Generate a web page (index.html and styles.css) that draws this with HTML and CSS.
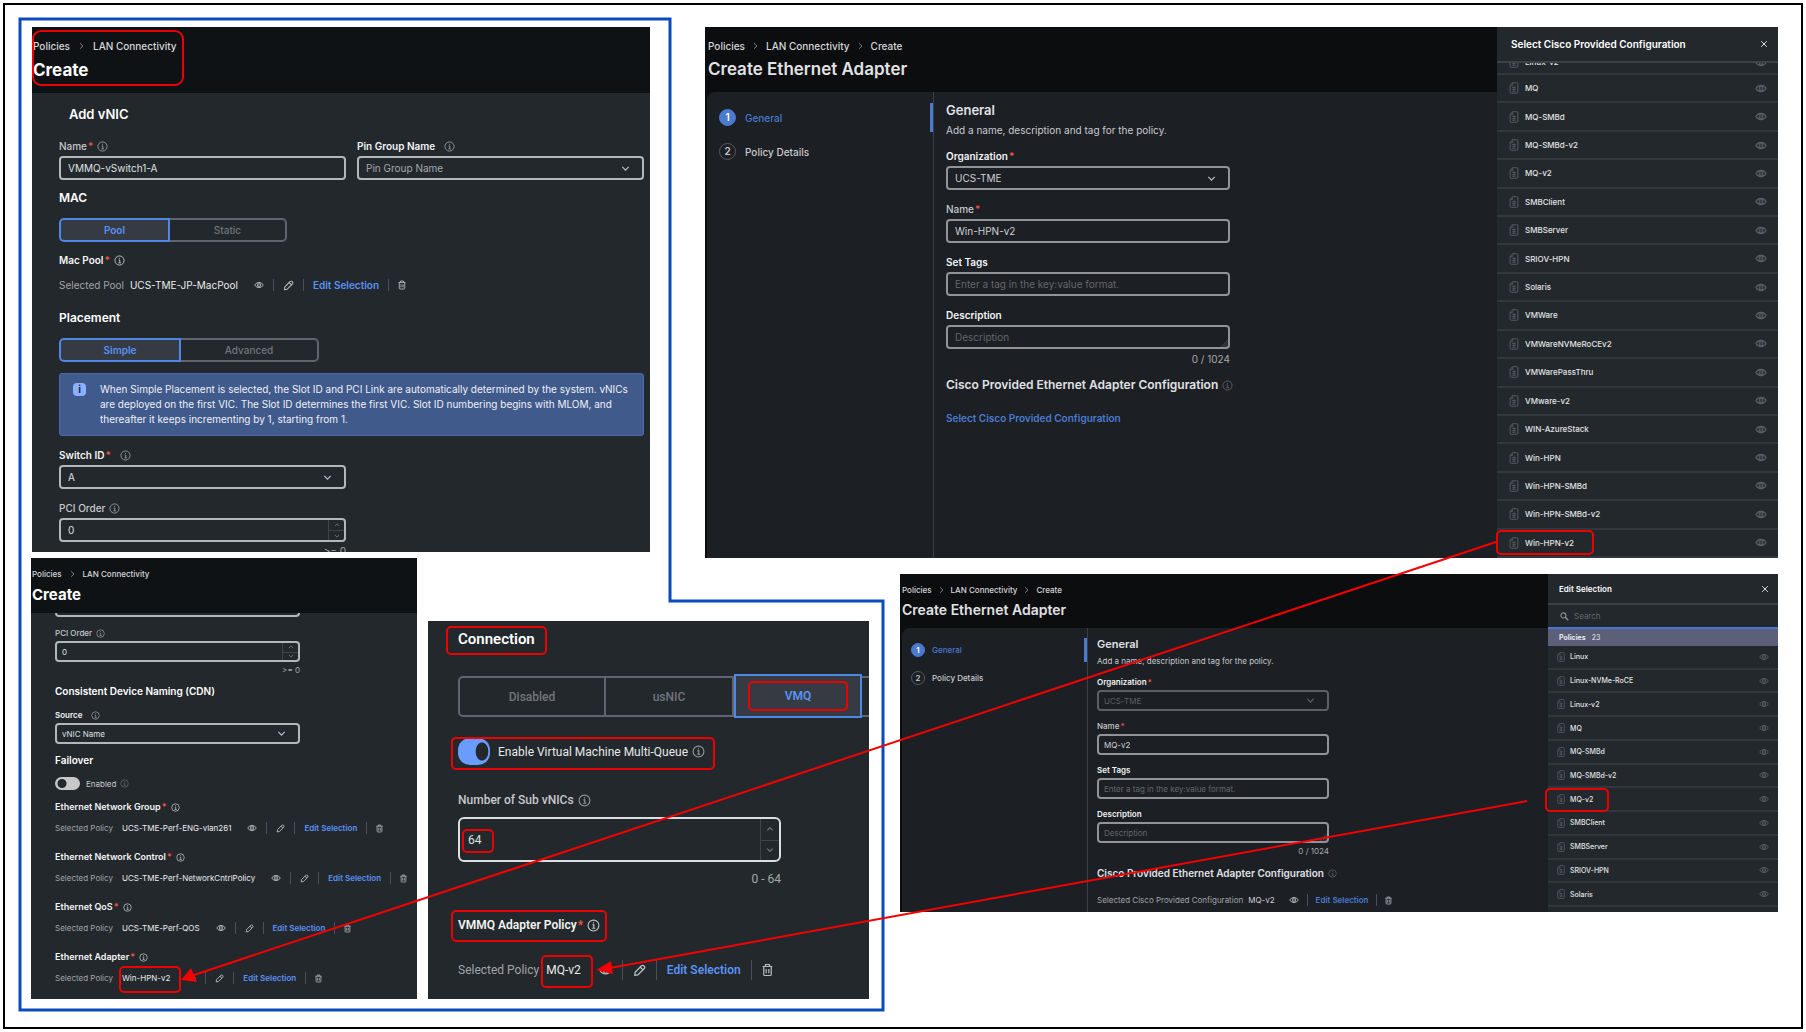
FILE: index.html
```html
<!DOCTYPE html>
<html lang="en">
<head>
<meta charset="utf-8">
<meta name="viewport" content="width=device-width, initial-scale=1">
<title>LAN Connectivity and Ethernet Adapter policies</title>
<link rel="stylesheet" href="styles.css">
</head>
<body>
<svg class="sprite" aria-hidden="true">
  <symbol id="info" viewBox="0 0 12 12"><circle cx="6" cy="6" r="5" fill="none" stroke="currentColor"/><path d="M5 5.4h1.3v3M4.8 8.6h2.8M6 3.1v1" fill="none" stroke="currentColor"/></symbol>
  <symbol id="eye" viewBox="0 0 14 10"><path d="M1 5Q3 1.4 7 1.4T13 5Q11 8.6 7 8.6T1 5Z" fill="none" stroke="currentColor" stroke-width="1.3"/><ellipse cx="7" cy="5" rx="2.2" ry="3" fill="none" stroke="currentColor" stroke-width="1.2"/><path d="M7 3.2v3.6" stroke="currentColor"/></symbol>
  <symbol id="pencil" viewBox="0 0 12 12"><path d="M1.6 10.6 2 7.6 7.6 1.8Q9 .8 10.2 1.8T10.2 4.4L4.6 10Z M6.6 2.8 9.2 5.4" fill="none" stroke="currentColor" stroke-width="1.2" stroke-linejoin="round"/></symbol>
  <symbol id="trash" viewBox="0 0 10 12"><path d="M.6 2.8h8.8M3.2 2.6V1h3.6v1.6M1.6 3v7q0 1 1 1h4.8q1 0 1-1V3M3.8 5v4M6.2 5v4" fill="none" stroke="currentColor" stroke-width="1.1"/></symbol>
  <symbol id="chev" viewBox="0 0 10 10"><path d="M1.5 3.2 5 6.8 8.5 3.2" fill="none" stroke="currentColor" stroke-width="1.4"/></symbol>
  <symbol id="chev-up" viewBox="0 0 10 10"><path d="M1.5 6.8 5 3.2 8.5 6.8" fill="none" stroke="currentColor" stroke-width="1.4"/></symbol>
  <symbol id="crumb" viewBox="0 0 6 10"><path d="M1.2 1.6 4.8 5 1.2 8.4" fill="none" stroke="currentColor"/></symbol>
  <symbol id="doc" viewBox="0 0 10 13"><path d="M3.4.8H8q1.2 0 1.2 1.2v9q0 1.2-1.2 1.2H2Q.8 12.200.8 11V3.600Z" fill="none" stroke="currentColor"/><path d="M3.600 1v2.800H1M3 6h4M3 8h4M3 10h4M5 4.500v6" fill="none" stroke="currentColor" stroke-width=".8"/></symbol>
  <symbol id="x" viewBox="0 0 10 10"><path d="M1.500 1.500l7 7M8.500 1.500l-7 7" stroke="currentColor" stroke-width="1.200"/></symbol>
  <symbol id="search" viewBox="0 0 10 10"><circle cx="3.800" cy="3.800" r="2.800" fill="none" stroke="currentColor" stroke-width="1.200"/><path d="M5.800 5.800 9.200 9.200" stroke="currentColor" stroke-width="1.600"/></symbol>
  <symbol id="grip" viewBox="0 0 10 10"><path d="M1 10 10 1M4 10l6-6M7 10l3-3" stroke="currentColor"/></symbol>
</svg>

<main class="figure">
  <div class="row row-top">
    <section class="panel md vnic" aria-label="Add vNIC">
      <header class="head">
        <div class="head-text mark mark-head">
          <nav class="crumbs"><a href="#">Policies</a><svg><use href="#crumb"/></svg><a href="#">LAN Connectivity</a></nav>
          <h1>Create</h1>
        </div>
      </header>
      <div class="body">
        <h2 class="title">Add vNIC</h2>
        <div class="pair">
          <div class="field">
            <label for="a-name">Name<i>*</i><svg class="ic"><use href="#info"/></svg></label>
            <input id="a-name" value="VMMQ-vSwitch1-A">
          </div>
          <div class="field">
            <label class="strong" for="a-pin">Pin Group Name<svg class="ic gap"><use href="#info"/></svg></label>
            <div class="select"><select id="a-pin" class="soft"><option>Pin Group Name</option></select><svg><use href="#chev"/></svg></div>
          </div>
        </div>
        <h3>MAC</h3>
        <div class="seg mac"><button class="on">Pool</button><button>Static</button></div>
        <div class="label strong">Mac Pool<i>*</i><svg class="ic"><use href="#info"/></svg></div>
        <div class="chosen"><span>Selected Pool</span><b>UCS-TME-JP-MacPool</b><button aria-label="View"><svg class="eye"><use href="#eye"/></svg></button><hr><button aria-label="Edit"><svg class="ic"><use href="#pencil"/></svg></button><hr><a href="#">Edit Selection</a><hr><button aria-label="Delete"><svg class="trash"><use href="#trash"/></svg></button></div>
        <h3 class="place">Placement</h3>
        <div class="seg placement"><button class="on">Simple</button><button>Advanced</button></div>
        <div class="banner"><span class="badge">i</span><p>When Simple Placement is selected, the Slot ID and PCI Link are automatically determined by the system. vNICs<br>are deployed on the first VIC. The Slot ID determines the first VIC. Slot ID numbering begins with MLOM, and<br>thereafter it keeps incrementing by 1, starting from 1.</p></div>
        <div class="field half">
          <label class="strong" for="a-switch">Switch ID<i>*</i><svg class="ic gap"><use href="#info"/></svg></label>
          <div class="select"><select id="a-switch"><option>A</option></select><svg><use href="#chev"/></svg></div>
        </div>
        <div class="field half">
          <label for="a-pci">PCI Order<svg class="ic"><use href="#info"/></svg></label>
          <div class="number"><input id="a-pci" inputmode="numeric" value="0"><div><button aria-label="Increase"><svg><use href="#chev-up"/></svg></button><button aria-label="Decrease"><svg><use href="#chev"/></svg></button></div></div>
          <small>&gt;= 0</small>
        </div>
      </div>
    </section>

    <section class="panel md adapter" aria-label="Create Ethernet Adapter">
      <div class="wizard">
        <header class="head">
          <nav class="crumbs"><a href="#">Policies</a><svg><use href="#crumb"/></svg><a href="#">LAN Connectivity</a><svg><use href="#crumb"/></svg><a href="#">Create</a></nav>
          <h1>Create Ethernet Adapter</h1>
        </header>
        <div class="split">
          <ol class="steps"><li class="on"><span>1</span>General</li><li><span>2</span>Policy Details</li></ol>
          <div class="form">
            <h2>General</h2>
            <p>Add a name, description and tag for the policy.</p>
            <div class="field"><label class="strong" for="d-org">Organization<i>*</i></label><div class="select"><select id="d-org"><option>UCS-TME</option></select><svg><use href="#chev"/></svg></div></div>
            <div class="field"><label for="d-name">Name<i>*</i></label><input id="d-name" value="Win-HPN-v2"></div>
            <div class="field"><label class="strong" for="d-tags">Set Tags</label><input id="d-tags" placeholder="Enter a tag in the key:value format."></div>
            <div class="field"><label class="strong" for="d-desc">Description</label><div class="area"><textarea id="d-desc" placeholder="Description"></textarea><svg><use href="#grip"/></svg></div><small>0 / 1024</small></div>
            <h3>Cisco Provided Ethernet Adapter Configuration<svg class="ic"><use href="#info"/></svg></h3>
            <a class="pick" href="#">Select Cisco Provided Configuration</a>
          </div>
        </div>
      </div>
      <aside class="drawer">
        <div class="drawer-head"><h2>Select Cisco Provided Configuration</h2><button aria-label="Close"><svg><use href="#x"/></svg></button></div>
        <div class="cut"><div class="item"><svg class="doc"><use href="#doc"/></svg>Linux-v2<svg class="eye"><use href="#eye"/></svg></div></div>
        <ul>
          <li class="item"><svg class="doc"><use href="#doc"/></svg>MQ<svg class="eye"><use href="#eye"/></svg></li>
          <li class="item"><svg class="doc"><use href="#doc"/></svg>MQ-SMBd<svg class="eye"><use href="#eye"/></svg></li>
          <li class="item"><svg class="doc"><use href="#doc"/></svg>MQ-SMBd-v2<svg class="eye"><use href="#eye"/></svg></li>
          <li class="item"><svg class="doc"><use href="#doc"/></svg>MQ-v2<svg class="eye"><use href="#eye"/></svg></li>
          <li class="item"><svg class="doc"><use href="#doc"/></svg>SMBClient<svg class="eye"><use href="#eye"/></svg></li>
          <li class="item"><svg class="doc"><use href="#doc"/></svg>SMBServer<svg class="eye"><use href="#eye"/></svg></li>
          <li class="item"><svg class="doc"><use href="#doc"/></svg>SRIOV-HPN<svg class="eye"><use href="#eye"/></svg></li>
          <li class="item"><svg class="doc"><use href="#doc"/></svg>Solaris<svg class="eye"><use href="#eye"/></svg></li>
          <li class="item"><svg class="doc"><use href="#doc"/></svg>VMWare<svg class="eye"><use href="#eye"/></svg></li>
          <li class="item"><svg class="doc"><use href="#doc"/></svg>VMWareNVMeRoCEv2<svg class="eye"><use href="#eye"/></svg></li>
          <li class="item"><svg class="doc"><use href="#doc"/></svg>VMWarePassThru<svg class="eye"><use href="#eye"/></svg></li>
          <li class="item"><svg class="doc"><use href="#doc"/></svg>VMware-v2<svg class="eye"><use href="#eye"/></svg></li>
          <li class="item"><svg class="doc"><use href="#doc"/></svg>WIN-AzureStack<svg class="eye"><use href="#eye"/></svg></li>
          <li class="item"><svg class="doc"><use href="#doc"/></svg>Win-HPN<svg class="eye"><use href="#eye"/></svg></li>
          <li class="item"><svg class="doc"><use href="#doc"/></svg>Win-HPN-SMBd<svg class="eye"><use href="#eye"/></svg></li>
          <li class="item"><svg class="doc"><use href="#doc"/></svg>Win-HPN-SMBd-v2<svg class="eye"><use href="#eye"/></svg></li>
          <li class="item mark mark-item"><svg class="doc"><use href="#doc"/></svg>Win-HPN-v2<svg class="eye"><use href="#eye"/></svg></li>
        </ul>
      </aside>
    </section>
  </div>

  <div class="row row-bottom">
    <section class="panel sm policies" aria-label="vNIC policies">
      <header class="head">
        <nav class="crumbs"><a href="#">Policies</a><svg><use href="#crumb"/></svg><a href="#">LAN Connectivity</a></nav>
        <h1>Create</h1>
      </header>
      <div class="body">
        <div class="stub"></div>
        <div class="field">
          <label for="b-pci">PCI Order<svg class="ic"><use href="#info"/></svg></label>
          <div class="number"><input id="b-pci" inputmode="numeric" value="0"><div><button aria-label="Increase"><svg><use href="#chev-up"/></svg></button><button aria-label="Decrease"><svg><use href="#chev"/></svg></button></div></div>
          <small>&gt;= 0</small>
        </div>
        <h3>Consistent Device Naming (CDN)</h3>
        <div class="field source">
          <label class="strong" for="b-src">Source<svg class="ic gap"><use href="#info"/></svg></label>
          <div class="select"><select id="b-src"><option>vNIC Name</option></select><svg><use href="#chev"/></svg></div>
        </div>
        <h3 class="failover">Failover</h3>
        <label class="toggle"><input type="checkbox"><span>Enabled</span><svg class="ic"><use href="#info"/></svg></label>
        <div class="label strong">Ethernet Network Group<i>*</i><svg class="ic"><use href="#info"/></svg></div>
        <div class="chosen"><span>Selected Policy</span><b>UCS-TME-Perf-ENG-vlan261</b><button aria-label="View"><svg class="eye"><use href="#eye"/></svg></button><hr><button aria-label="Edit"><svg class="ic"><use href="#pencil"/></svg></button><hr><a href="#">Edit Selection</a><hr><button aria-label="Delete"><svg class="trash"><use href="#trash"/></svg></button></div>
        <div class="label strong">Ethernet Network Control<i>*</i><svg class="ic"><use href="#info"/></svg></div>
        <div class="chosen"><span>Selected Policy</span><b>UCS-TME-Perf-NetworkCntrlPolicy</b><button aria-label="View"><svg class="eye"><use href="#eye"/></svg></button><hr><button aria-label="Edit"><svg class="ic"><use href="#pencil"/></svg></button><hr><a href="#">Edit Selection</a><hr><button aria-label="Delete"><svg class="trash"><use href="#trash"/></svg></button></div>
        <div class="label strong">Ethernet QoS<i>*</i><svg class="ic"><use href="#info"/></svg></div>
        <div class="chosen"><span>Selected Policy</span><b>UCS-TME-Perf-QOS</b><button aria-label="View"><svg class="eye"><use href="#eye"/></svg></button><hr><button aria-label="Edit"><svg class="ic"><use href="#pencil"/></svg></button><hr><a href="#">Edit Selection</a><hr><button aria-label="Delete"><svg class="trash"><use href="#trash"/></svg></button></div>
        <div class="label strong">Ethernet Adapter<i>*</i><svg class="ic"><use href="#info"/></svg></div>
        <div class="chosen"><span>Selected Policy</span><b class="mark mark-policy">Win-HPN-v2</b><button aria-label="View"><svg class="eye"><use href="#eye"/></svg></button><hr><button aria-label="Edit"><svg class="ic"><use href="#pencil"/></svg></button><hr><a href="#">Edit Selection</a><hr><button aria-label="Delete"><svg class="trash"><use href="#trash"/></svg></button></div>
      </div>
    </section>

    <section class="panel lg connection" aria-label="Connection">
      <h2><span class="mark mark-title">Connection</span></h2>
      <div class="seg modes"><button>Disabled</button><button>usNIC</button><button class="on"><span class="mark mark-vmq">VMQ</span></button><button aria-label="More"></button></div>
      <label class="toggle mark mark-toggle"><input type="checkbox" checked><span>Enable Virtual Machine Multi-Queue</span><svg class="ic"><use href="#info"/></svg></label>
      <div class="field">
        <label for="c-sub">Number of Sub vNICs<svg class="ic"><use href="#info"/></svg></label>
        <div class="number mark mark-64"><input id="c-sub" inputmode="numeric" value="64"><div><button aria-label="Increase"><svg><use href="#chev-up"/></svg></button><button aria-label="Decrease"><svg><use href="#chev"/></svg></button></div></div>
        <small>0 - 64</small>
      </div>
      <div class="label strong mark mark-vmmq">VMMQ Adapter Policy<i>*</i><svg class="ic"><use href="#info"/></svg></div>
      <div class="chosen"><span>Selected Policy</span><b class="mark mark-mq">MQ-v2</b><button aria-label="View"><svg class="eye"><use href="#eye"/></svg></button><hr><button aria-label="Edit"><svg class="ic"><use href="#pencil"/></svg></button><hr><a href="#">Edit Selection</a><hr><button aria-label="Delete"><svg class="trash"><use href="#trash"/></svg></button></div>
    </section>

    <section class="panel sm adapter edit" aria-label="Edit Ethernet Adapter selection">
      <div class="wizard">
        <header class="head">
          <nav class="crumbs"><a href="#">Policies</a><svg><use href="#crumb"/></svg><a href="#">LAN Connectivity</a><svg><use href="#crumb"/></svg><a href="#">Create</a></nav>
          <h1>Create Ethernet Adapter</h1>
        </header>
        <div class="split">
          <ol class="steps"><li class="on"><span>1</span>General</li><li><span>2</span>Policy Details</li></ol>
          <div class="form">
            <h2>General</h2>
            <p>Add a name, description and tag for the policy.</p>
            <div class="field"><label class="strong" for="e-org">Organization<i>*</i></label><div class="select off"><select id="e-org" disabled><option>UCS-TME</option></select><svg><use href="#chev"/></svg></div></div>
            <div class="field"><label for="e-name">Name<i>*</i></label><input id="e-name" value="MQ-v2"></div>
            <div class="field"><label class="strong" for="e-tags">Set Tags</label><input id="e-tags" placeholder="Enter a tag in the key:value format."></div>
            <div class="field"><label class="strong" for="e-desc">Description</label><div class="area"><textarea id="e-desc" placeholder="Description"></textarea><svg><use href="#grip"/></svg></div><small>0 / 1024</small></div>
            <h3>Cisco Provided Ethernet Adapter Configuration<svg class="ic"><use href="#info"/></svg></h3>
            <div class="chosen"><span>Selected Cisco Provided Configuration</span><b>MQ-v2</b><button aria-label="View"><svg class="eye"><use href="#eye"/></svg></button><hr><a href="#">Edit Selection</a><hr><button aria-label="Delete"><svg class="trash"><use href="#trash"/></svg></button></div>
          </div>
        </div>
      </div>
      <aside class="drawer">
        <div class="drawer-head"><h2>Edit Selection</h2><button aria-label="Close"><svg><use href="#x"/></svg></button></div>
        <label class="search"><svg><use href="#search"/></svg><input aria-label="Search" placeholder="Search"></label>
        <div class="count"><b>Policies</b><span>23</span></div>
        <ul>
          <li class="item"><svg class="doc"><use href="#doc"/></svg>Linux<svg class="eye"><use href="#eye"/></svg></li>
          <li class="item"><svg class="doc"><use href="#doc"/></svg>Linux-NVMe-RoCE<svg class="eye"><use href="#eye"/></svg></li>
          <li class="item"><svg class="doc"><use href="#doc"/></svg>Linux-v2<svg class="eye"><use href="#eye"/></svg></li>
          <li class="item"><svg class="doc"><use href="#doc"/></svg>MQ<svg class="eye"><use href="#eye"/></svg></li>
          <li class="item"><svg class="doc"><use href="#doc"/></svg>MQ-SMBd<svg class="eye"><use href="#eye"/></svg></li>
          <li class="item"><svg class="doc"><use href="#doc"/></svg>MQ-SMBd-v2<svg class="eye"><use href="#eye"/></svg></li>
          <li class="item mark mark-item"><svg class="doc"><use href="#doc"/></svg>MQ-v2<svg class="eye"><use href="#eye"/></svg></li>
          <li class="item"><svg class="doc"><use href="#doc"/></svg>SMBClient<svg class="eye"><use href="#eye"/></svg></li>
          <li class="item"><svg class="doc"><use href="#doc"/></svg>SMBServer<svg class="eye"><use href="#eye"/></svg></li>
          <li class="item"><svg class="doc"><use href="#doc"/></svg>SRIOV-HPN<svg class="eye"><use href="#eye"/></svg></li>
          <li class="item"><svg class="doc"><use href="#doc"/></svg>Solaris<svg class="eye"><use href="#eye"/></svg></li>
        </ul>
      </aside>
    </section>
  </div>

  <svg class="links" viewBox="5 5 1796 1022" preserveAspectRatio="none" aria-hidden="true">
    <path class="outline" d="M20 19H670V601H883V1010H20Z"/>
    <path class="arrow" d="M1496 542 194 975M1527 801 610 968"/>
    <path class="tip" d="M181 980 191 968 197 982ZM596 970 611 961 613 974Z"/>
  </svg>
</main>
</body>
</html>
```
FILE: styles.css
```css
*, *::after { box-sizing: border-box; }
body { margin: 0; padding: 3px; background: #fff; font-family: Inter, "Liberation Sans", sans-serif; color: #e6e8ea; }
h1, h2, h3, p, ul, ol { margin: 0; padding: 0; }
ul, ol { list-style: none; }
a { color: inherit; text-decoration: none; }
button { margin: 0; padding: 0; border: 0; background: none; color: inherit; font: inherit; display: flex; align-items: center; justify-content: center; }
input, select, textarea { font: inherit; color: inherit; }
svg { display: block; flex: none; }
i { font-style: normal; color: #f0524f; }
.sprite { position: absolute; width: 0; height: 0; }

.figure { position: relative; border: 2px solid #000; padding: 22px 23px 28px 26px; }
.row { display: grid; }
.row-top { grid-template-columns: 618fr 1073fr; gap: 55px; padding-left: 1px; align-items: start; }
.row-bottom { grid-template-columns: 386fr 441fr 898fr; column-gap: 11px; align-items: end; }

.links { position: absolute; inset: 0; width: 100%; height: 100%; pointer-events: none; z-index: 2; }
.outline { fill: none; stroke: #0a4cbd; stroke-width: 3; }
.arrow { fill: none; stroke: #f40000; stroke-width: 2; }
.tip { fill: #f40000; }

/* highlight frames */
.mark { position: relative; }
.mark::after { content: ""; position: absolute; inset: var(--mark); border: 2px solid #ee0000; border-radius: var(--mark-r, 5px); pointer-events: none; z-index: 1; }
.mark-head { --mark: 3px auto 7px 0; --mark-r: 9px; }
.mark-head::after { width: 152px; }
.mark-item { --mark: 0 184px 1px -1px; }
.sm .mark-item { --mark: 0 169px -2px -3px; }
.mark-policy { --mark: -5px -11px -8px -3px; }
.mark-title { --mark: -2px -12px -5px; }
.mark-vmq { --mark: -5px -37px; }
.mark-toggle { --mark: -1px -10px -5px -7px; }
.mark-64 { --mark: 12px auto 9px 4px; }
.mark-64::after { width: 32px; }
.mark-vmmq { --mark: -5px -7px -7px; }
.mark-mq { --mark: -5px -12px -8px -5px; }

/* panels */
.panel { background: #23282c; overflow: hidden; font-size: var(--fs); }
.md { --fs: 10px; --line: 14px; --ctl: 24px; --gap: 3px; --ic: 11px; --act: 9px; --h3: 12px; --h1: 17px; --h2: 13px; --pad: 7px; }
.sm { --fs: 8px; --line: 12px; --ctl: 21px; --gap: 2px; --ic: 9px; --act: 8px; --h3: 10px; --h1: 15px; --h2: 11px; --pad: 5px; }
.lg { --fs: 12px; --line: 18px; --ctl: 45px; --gap: 8px; --ic: 13px; --act: 10px; --h2: 15px; --pad: 8px; font-family: Roboto, "Liberation Sans", sans-serif; }

.head { background: #0f1214; }
.crumbs { display: flex; align-items: center; gap: 9px; line-height: 14px; font-weight: 500; color: #d6d8da; }
.crumbs svg { width: 5px; height: 8px; color: #9a9ea2; }
h1 { font-size: var(--h1); line-height: 20px; font-weight: 700; color: #fff; }
h2 { font-size: var(--h2); line-height: 16px; font-weight: 600; color: #fff; }
h3 { font-size: var(--h3); line-height: 16px; font-weight: 600; color: #fff; }

/* fields */
.field { display: flex; flex-direction: column; }
.field > label, .label { display: flex; align-items: center; line-height: var(--line); margin-bottom: var(--gap); color: #c6c9cc; font-weight: 500; }
.field > label.strong, .label.strong { color: #f2f4f5; font-weight: 600; }
.label { margin-bottom: 0; }
label i, .label i { margin-left: 1px; }
label .ic, .label .ic { margin-left: 4px; color: #96999c; }
.label .ic { color: #c4c6c8; }
label .gap { margin-left: 9px; }
.ic { width: var(--ic); height: var(--ic); }
.field input, select, textarea { width: 100%; height: var(--ctl); margin: 0; padding: 0 var(--pad); border: 2px solid #b3b7ba; border-radius: 4px; background: transparent; color: #dfe1e3; outline: 0; appearance: none; display: block; }
select.soft { color: #a6a9ac; }
select { padding-right: 24px; }
.select, .number, .area { position: relative; }
.select { display: grid; grid-template-columns: 1fr; align-items: center; }
.select > * { grid-area: 1 / 1; }
.select svg { width: 9px; height: 9px; justify-self: end; margin-right: 14px; color: #b9bcc4; pointer-events: none; }
.select.off svg { color: #5c6065; }
textarea { resize: none; padding-top: 3px; line-height: var(--line); overflow: hidden; }
.area svg { position: absolute; right: 2px; bottom: 2px; width: 8px; height: 8px; color: #55595e; }
::placeholder { color: #63676b; opacity: 1; }
.number > div { position: absolute; top: 2px; right: 2px; bottom: 2px; width: 16px; display: grid; grid-template-rows: 1fr 1fr; border-left: 1px solid #3f4449; color: #74787c; }
.number button + button { border-top: 1px solid #3f4449; }
.number svg { width: 6px; height: 6px; }
small { font-size: inherit; align-self: flex-end; line-height: 12px; color: #a6a9ac; }

.seg { display: flex; height: 24px; }
.seg button { flex: 1; border: 2px solid #60646b; border-left: 0; color: #72767b; font-weight: 500; }
.seg button:first-child { border-radius: 5px 0 0 5px; border-left: 2px solid #60646b; }
.seg button:last-child { border-radius: 0 5px 5px 0; }
.seg button.on { border: 2px solid #4f86e8; background: #363a42; color: #5a92f5; font-weight: 600; }

.chosen { display: flex; align-items: center; gap: var(--act); color: #a1a5a8; white-space: nowrap; }
.chosen b { font-weight: 400; color: #e9ebec; margin: 0 calc(var(--act) - 2px) 0 -3px; }
.chosen hr { width: 1px; height: 12px; margin: 0; border: 0; background: #4b4f5c; }
.chosen a { color: #5a92f5; font-weight: 600; }
.chosen button { color: #b9bcbf; }
.eye { width: 10px; height: 8px; }
.trash { width: 8px; height: 10px; }
.sm .trash { width: 7px; height: 9px; }

/* add vNIC */
.vnic { height: 525px; }
.head-text { height: 66px; padding: 12px 0 0 1px; }
.head-text h1 { margin-top: 7px; }
.vnic .body { padding: 13px 6px 0 27px; }
.title { padding-left: 10px; margin-bottom: 17px; }
.pair { display: grid; grid-template-columns: 1fr 1fr; gap: 11px; }
.vnic h3 { margin: 10px 0 12px; }
.vnic h3.place { margin-top: 17px; }
.mac { width: 228px; }
.placement { width: 260px; }
.mac .on { flex: 0 0 111px; }
.placement .on { flex: 0 0 122px; }
.vnic .label { margin-top: 11px; }
.vnic .chosen { margin-top: 10px; line-height: 16px; }
.banner { display: flex; gap: 14px; margin-top: 11px; padding: 8px 13px; border: 1px solid #4a69ae; border-radius: 3px; background: #415a8c; line-height: 15px; white-space: nowrap; color: #eef1f6; }
.badge { width: 13px; height: 13px; margin-top: 1px; border-radius: 4px; background: #8ab0ff; color: #1e2a44; line-height: 13px; font-weight: 700; text-align: center; }
.half { width: 287px; margin-top: 12px; }
.half small { margin-top: 3px; }

/* wizard panels */
.adapter { display: grid; grid-template-columns: 792fr 281fr; height: 531px; background: #0c0d0f; color: #c9cbce; }
.adapter h1, .adapter h2, .adapter h3 { color: #e0e2e4; }
.wizard { display: flex; flex-direction: column; padding-left: 2px; }
.adapter .head { background: #0c0d0f; height: 65px; padding: 12px 0 0 1px; }
.adapter h1 { margin-top: 6px; font-weight: 600; }
.adapter .crumbs { gap: 8px; }
.split { flex: 1; display: grid; grid-template-columns: 227px 1fr; background: #1c1f24; border-radius: 8px 0 0 0; }
.steps { border-right: 1px solid #3c4045; padding: 11px 0 0 12px; font-weight: 500; }
.steps li { display: flex; align-items: center; gap: 9px; height: 29px; margin-bottom: 5px; }
.steps li.on { color: #4a7bd0; border-right: 3px solid #4a7bd0; }
.steps span { width: 17px; height: 17px; border: 1px solid #55595e; border-radius: 50%; line-height: 15px; text-align: center; font-weight: 600; }
.steps .on span { background: #4a7bd0; border-color: #4a7bd0; color: #fff; }
.form { padding: 10px 0 0 12px; }
.form p { line-height: 14px; margin: 5px 0 12px; white-space: nowrap; }
.form .field { width: 284px; margin-bottom: 12px; }
.form .field input, .form select, .form textarea { border-color: #909498; color: #cfd1d3; }
.form small { margin-top: 4px; }
.form h3 { display: flex; align-items: center; gap: 4px; white-space: nowrap; }
.form h3 .ic { color: #5f6367; }
.pick { display: block; margin-top: 18px; line-height: 14px; color: #4a7bd0; font-weight: 600; }
.form .chosen a { color: #4a7bd0; }
.form .chosen b { color: #cfd1d3; }

.drawer { display: flex; flex-direction: column; background: #23282c; color: #e2e4e6; }
.drawer-head { display: flex; align-items: center; justify-content: space-between; height: 36px; padding: 0 10px 0 14px; border-bottom: 2px solid #3d4247; }
.drawer .drawer-head h2 { font-size: 10px; color: #fff; }
.drawer-head svg { width: 8px; height: 8px; }
.drawer ul { flex: 1; display: grid; grid-auto-rows: 1fr; }
.item { display: grid; grid-template-columns: 10px 1fr auto; align-items: center; gap: 6px; padding: 0 11px 0 12px; font-size: 8px; font-weight: 500; border-bottom: 2px solid #32373b; }
.item svg { color: #5c6066; }
.doc { width: 10px; height: 12px; }
.item .eye { width: 12px; height: 9px; }
.cut { height: 12px; display: flex; flex-direction: column; justify-content: flex-end; overflow: hidden; }
.cut .item { height: 24px; flex: none; }

/* smaller wizard with open selection */
.edit { grid-template-columns: 648fr 230fr; height: 338px; margin: 0 0 87px 20px; }
.edit .head { height: 54px; padding: 9px 0 0; }
.edit h1 { margin-top: 3px; font-size: 14px; }
.edit .crumbs { gap: 7px; }
.edit .split { grid-template-columns: 186px 1fr; }
.edit .steps { padding: 10px 0 0 9px; }
.edit .steps li { height: 24px; margin-bottom: 4px; gap: 7px; }
.edit .steps span { width: 14px; height: 14px; line-height: 12px; }
.edit .form { padding: 8px 0 0 9px; }
.edit .form p { line-height: 12px; margin: 3px 0 9px; }
.edit .form .field { width: 232px; margin-bottom: 9px; }
.edit .form h3 { line-height: 14px; }
.edit .form .chosen { margin-top: 13px; line-height: 14px; }
.edit small { margin-top: 2px; line-height: 12px; }
.edit select:disabled { border-color: #5c6065; color: #5c6065; opacity: 1; }
.edit .drawer-head { height: 31px; padding: 0 9px 0 11px; }
.edit .drawer-head h2 { font-size: 8px; }
.search { display: flex; align-items: center; gap: 5px; height: 24px; padding-left: 12px; border-bottom: 2px solid #4674cf; color: #8a8e92; }
.search svg { width: 9px; height: 9px; }
.search input { border: 0; background: none; padding: 0; width: 100px; outline: 0; }
.count { display: flex; align-items: center; gap: 6px; height: 17px; padding-left: 11px; background: #5b5f78; font-size: 7px; line-height: 17px; color: #e8e9ee; }
.edit .item { font-size: 7px; padding: 0 9px; gap: 5px; grid-template-columns: 8px 1fr auto; }
.edit .item .doc { width: 8px; height: 10px; }
.edit .item .eye { width: 10px; height: 8px; }
.edit ul { margin-bottom: 5px; }

/* policies */
.policies { height: 441px; --act: 9px; }
.policies .head { height: 55px; padding: 9px 0 0 1px; }
.policies .crumbs { gap: 8px; }
.policies h1 { margin-top: 4px; }
.policies .body { padding-left: 24px; }
.stub { width: 245px; height: 4px; border: 2px solid #b3b7ba; border-top: 0; border-radius: 0 0 4px 4px; }
.policies .field { width: 245px; margin-top: 10px; }
.policies small { margin-top: 3px; line-height: 10px; }
.policies h3 { line-height: 14px; margin-top: 9px; }
.policies .field.source { margin-top: 11px; }
.toggle { display: flex; align-items: center; }
.toggle input { appearance: none; width: 25px; height: 13px; margin: 0 6px 0 0; border-radius: 7px; background: radial-gradient(circle at 7px 50%, #23282c 4px, #c8c8c8 5px); }
.policies .toggle { margin: 10px 0 11px; color: #c6c9cc; }
.policies .toggle .ic { color: #66696d; }
.policies .label { font-size: 9px; }
.policies .chosen { margin: 8px 0 16px; line-height: 14px; }
.policies .chosen b { margin-left: 0; }

/* connection */
.connection { height: 378px; padding: 7px 0 0 30px; white-space: nowrap; }
.connection h2 { height: 22px; line-height: 22px; }
.connection h2 span { display: inline-block; }
.modes { height: 41px; margin-top: 26px; }
.modes button { flex: 0 0 128px; }
.modes button:first-child { flex-basis: 148px; }
.modes button.on { height: 44px; margin-top: -2px; }
.modes button:last-child { flex: 1; min-width: 7px; border-right: 0; border-radius: 0; }
.modes span { line-height: 20px; }
.connection .toggle { width: fit-content; height: 27px; margin-top: 21px; }
.connection .toggle input { width: 32px; height: 27px; margin-right: 8px; border-radius: 12px; background: radial-gradient(ellipse 7px 10px at 24px 50%, #23282c 85%, #6a9cff 96%); }
.connection .field { width: 323px; margin-top: 26px; }
.connection .field input { border-color: #dcdfe1; border-radius: 6px; }
.connection .number > div { width: 19px; }
.connection .number svg { width: 8px; height: 8px; }
.connection small { margin-top: 8px; line-height: 18px; }
.connection .label { width: fit-content; margin-top: 27px; height: 20px; }
.connection .chosen { margin-top: 25px; line-height: 20px; }
.connection .chosen hr { height: 20px; }
.connection .eye { width: 13px; height: 11px; }
.connection .trash { width: 11px; height: 16px; }
```
